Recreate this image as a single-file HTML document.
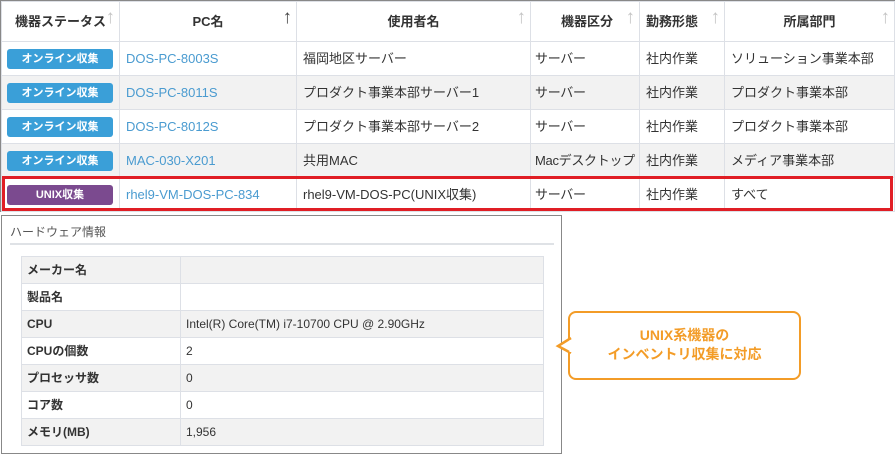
<!DOCTYPE html>
<html><head><meta charset="utf-8"><style>
*{margin:0;padding:0;box-sizing:border-box}
body{width:895px;height:455px;background:#fff;font-family:"Liberation Sans","Noto Sans CJK JP",sans-serif;position:relative;overflow:hidden;color:#333}
.frame{position:absolute;left:0;top:0;width:895px;height:212px;border:1px solid #888;border-bottom:none}
table.m{position:absolute;left:1px;top:1px;border-collapse:collapse;font-size:13px;table-layout:fixed;width:893px}
table.m td,table.m th{border:1px solid #dde0e6;height:34px;padding:0 6px;white-space:nowrap;overflow:hidden;text-align:left;font-weight:normal;line-height:16px}
table.m th{height:40px;font-weight:bold;text-align:center;position:relative;color:#333}
table.m th .ar{position:absolute;right:4px;top:8px;color:#c4c4c4;font-size:19px;font-weight:normal}
table.m tr:nth-child(odd) td{background:#f2f2f2}
.b{display:inline-block;width:106px;height:20px;line-height:20px;border-radius:3px;background:#3a9fd8;color:#fff;font-size:11px;font-weight:bold;text-align:center;vertical-align:middle}
table.m td:first-child{padding:0 5px}
table.m td:nth-child(4){padding:0 4px;letter-spacing:-0.3px}
.u{background:#7b4a8f}
a{color:#4a9bd0;text-decoration:none}
.red{position:absolute;left:2px;top:176px;width:891px;height:35px;border:3px solid #e01e25}
.hw{position:absolute;left:1px;top:215px;width:561px;height:239px;border:1px solid #888}
.hw .t{position:absolute;left:8px;top:7px;font-size:12px;color:#555}
.hw .ln{position:absolute;left:8px;top:27px;width:544px;height:2px;background:#dfe2e6}
table.h{position:absolute;left:19px;top:40px;border-collapse:collapse;font-size:12px;table-layout:fixed;width:523px}
table.h td{border:1px solid #dde0e6;height:27px;padding:0 5px;line-height:14px}
table.h td:first-child{width:159px;font-weight:bold}
table.h tr:nth-child(odd) td{background:#f2f2f2}
.co{position:absolute;left:568px;top:311px;width:233px;height:69px;border:2.5px solid #f39c27;border-radius:8px;color:#f39c27;font-weight:bold;font-size:14px;text-align:center;line-height:19px;padding-top:13px;background:#fff}
</style></head><body>
<div class="frame"></div>
<table class="m">
<colgroup><col style="width:118px"><col style="width:177px"><col style="width:234px"><col style="width:109px"><col style="width:85px"><col style="width:170px"></colgroup>
<tr><th>機器ステータス<span class="ar">↑</span></th><th>PC名<span class="ar" style="color:#444">↑</span></th><th>使用者名<span class="ar">↑</span></th><th style="text-align:left;padding-left:30px">機器区分<span class="ar">↑</span></th><th style="text-align:left;padding-left:6px">勤務形態<span class="ar">↑</span></th><th>所属部門<span class="ar">↑</span></th></tr>
<tr><td><span class="b">オンライン収集</span></td><td><a>DOS-PC-8003S</a></td><td>福岡地区サーバー</td><td>サーバー</td><td>社内作業</td><td>ソリューション事業本部</td></tr>
<tr><td><span class="b">オンライン収集</span></td><td><a>DOS-PC-8011S</a></td><td>プロダクト事業本部サーバー1</td><td>サーバー</td><td>社内作業</td><td>プロダクト事業本部</td></tr>
<tr><td><span class="b">オンライン収集</span></td><td><a>DOS-PC-8012S</a></td><td>プロダクト事業本部サーバー2</td><td>サーバー</td><td>社内作業</td><td>プロダクト事業本部</td></tr>
<tr><td><span class="b">オンライン収集</span></td><td><a>MAC-030-X201</a></td><td>共用MAC</td><td>Macデスクトップ</td><td>社内作業</td><td>メディア事業本部</td></tr>
<tr><td style="background:#fff"><span class="b u">UNIX収集</span></td><td style="background:#fff"><a>rhel9-VM-DOS-PC-834</a></td><td style="background:#fff">rhel9-VM-DOS-PC(UNIX収集)</td><td style="background:#fff">サーバー</td><td style="background:#fff">社内作業</td><td style="background:#fff">すべて</td></tr>
</table>
<div class="red"></div>
<div class="hw"><div class="t">ハードウェア情報</div><div class="ln"></div>
<table class="h">
<tr><td>メーカー名</td><td>&nbsp;</td></tr>
<tr><td>製品名</td><td>&nbsp;</td></tr>
<tr><td>CPU</td><td>Intel(R) Core(TM) i7-10700 CPU @ 2.90GHz</td></tr>
<tr><td>CPUの個数</td><td>2</td></tr>
<tr><td>プロセッサ数</td><td>0</td></tr>
<tr><td>コア数</td><td>0</td></tr>
<tr><td>メモリ(MB)</td><td>1,956</td></tr>
</table></div>
<div class="co">UNIX系機器の<br>インベントリ収集に対応</div>
<svg style="position:absolute;left:555px;top:336px" width="18" height="20"><path d="M16 2 L3 10 L16 17" fill="#fff" stroke="#f39c27" stroke-width="2.5" stroke-linejoin="miter"/><rect x="14.5" y="4" width="4" height="12" fill="#fff"/></svg>
</body></html>
